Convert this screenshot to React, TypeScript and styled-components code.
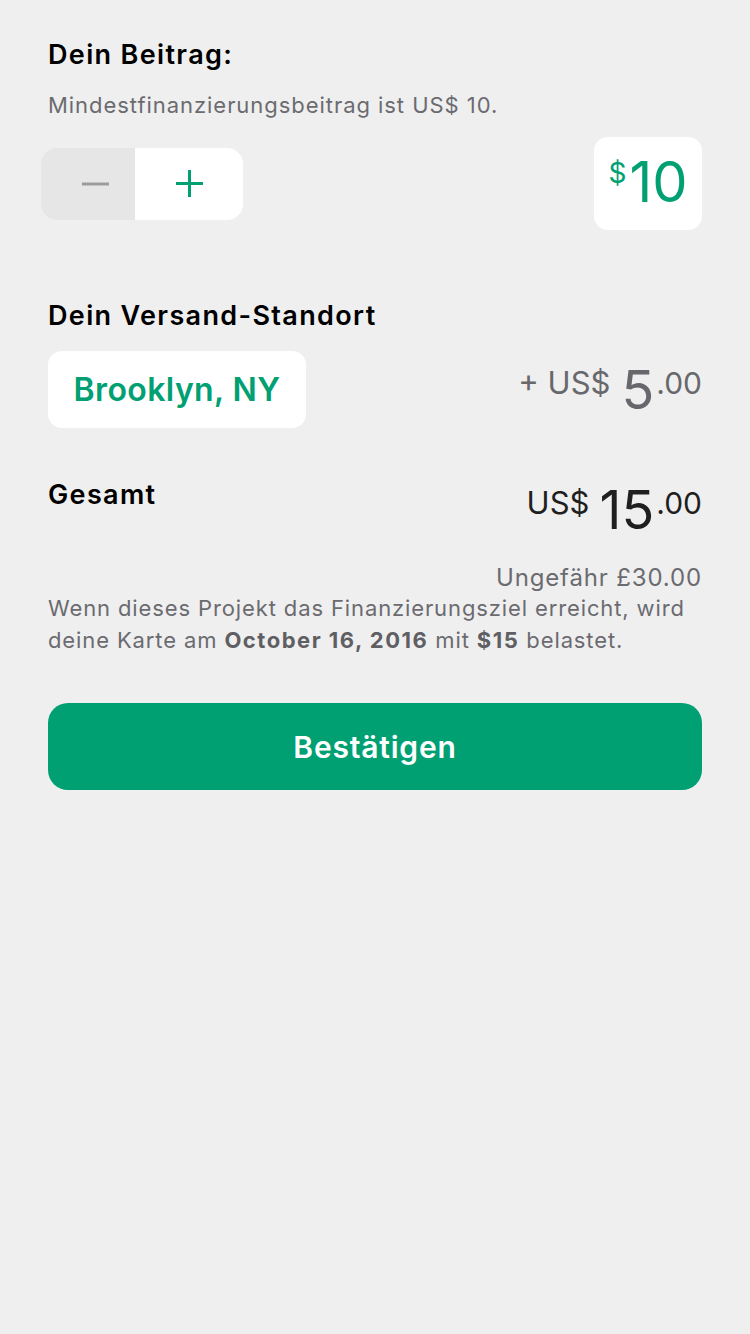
import React from "react";
import styled, { createGlobalStyle } from "styled-components";

const GREEN = "#00a073";

const Global = createGlobalStyle`
  html, body { margin: 0; padding: 0; background: #efefef; }
  body { font-family: "Inter", "Roboto", "Noto Sans", sans-serif; -webkit-font-smoothing: antialiased; }
  * { box-sizing: border-box; }
`;

const Page = styled.div`
  min-height: 1334px;
  background: #efefef;
  padding: 39px 48px 0 48px;
  display: flex;
  flex-direction: column;
`;

const SectionTitle = styled.div<{ $mt?: number }>`
  font-size: 27px;
  line-height: 32px;
  font-weight: 600;
  letter-spacing: 1.35px;
  color: #000;
  margin-top: ${(p) => p.$mt ?? 0}px;
`;

const Hint = styled.div`
  margin-top: 20px;
  font-size: 22px;
  line-height: 28px;
  letter-spacing: 0.95px;
  color: #6b6b6f;
`;

const Row = styled.div<{ $mt: number; $align?: string }>`
  display: flex;
  justify-content: space-between;
  align-items: ${(p) => p.$align ?? "center"};
  margin-top: ${(p) => p.$mt}px;
`;

const Stepper = styled.div`
  display: flex;
  width: 202px;
  height: 72px;
  border-radius: 16px;
  overflow: hidden;
  margin-left: -7px;
`;

const StepButton = styled.button<{ $minus?: boolean }>`
  border: none;
  padding: ${(p) => (p.$minus ? "0 0 0 14px" : "0")};
  flex: ${(p) => (p.$minus ? "0 0 94px" : "1")};
  background: ${(p) => (p.$minus ? "#e6e6e6" : "#ffffff")};
  display: flex;
  align-items: center;
  justify-content: center;
`;

const AmountBox = styled.div`
  background: #fff;
  border-radius: 14px;
  width: 108px;
  height: 93px;
  display: flex;
  align-items: flex-start;
  justify-content: center;
  padding-top: 17px;
  color: ${GREEN};
`;

const AmountSign = styled.span`
  font-size: 28px;
  line-height: 1;
  margin-top: 5px;
  margin-right: 3px;
`;

const AmountValue = styled.span`
  font-size: 56px;
  line-height: 1;
  font-weight: 400;
`;

const LocationButton = styled.div`
  background: #fff;
  border-radius: 14px;
  width: 258px;
  height: 77px;
  display: flex;
  align-items: center;
  justify-content: center;
  color: ${GREEN};
  font-size: 32px;
  letter-spacing: 0.4px;
  font-weight: 600;
`;

const Price = styled.div<{ $color: string; $mt?: number }>`
  display: flex;
  align-items: flex-start;
  color: ${(p) => p.$color};
  margin-top: ${(p) => p.$mt ?? 0}px;
`;

const Currency = styled.span<{ $gap: number }>`
  font-size: 31px;
  line-height: 1;
  margin-top: 4px;
  margin-right: ${(p) => p.$gap}px;
`;

const Whole = styled.span`
  font-size: 54px;
  line-height: 1;
`;

const Cents = styled.span`
  font-size: 30px;
  line-height: 1;
  margin-top: 5px;
  margin-left: 2px;
`;

const Approx = styled.div`
  margin-top: 27px;
  text-align: right;
  font-size: 24px;
  line-height: 28px;
  letter-spacing: 0.85px;
  color: #6b6b6f;
`;

const Note = styled.p`
  margin: 0;
  font-size: 22px;
  line-height: 32px;
  letter-spacing: 0.88px;
  color: #6b6b6f;
  b { font-weight: 700; color: #5f5f63; letter-spacing: 1.5px; }
`;

const Confirm = styled.button`
  margin-top: 47px;
  height: 87px;
  width: 100%;
  border: none;
  border-radius: 20px;
  background: ${GREEN};
  color: #fff;
  font-family: inherit;
  font-size: 30px;
  letter-spacing: 0.8px;
  font-weight: 600;
`;

export default function App() {
  return (
    <>
      <Global />
      <Page>
        <SectionTitle>Dein Beitrag:</SectionTitle>
        <Hint>Mindestfinanzierungsbeitrag ist US$ 10.</Hint>
        <Row $mt={18}>
          <Stepper>
            <StepButton $minus aria-label="minus">
              <svg width="27" height="4" viewBox="0 0 27 4">
                <rect x="0" y="0.5" width="27" height="3" fill="#9c9c9c" />
              </svg>
            </StepButton>
            <StepButton aria-label="plus">
              <svg width="27" height="27" viewBox="0 0 27 27">
                <rect x="0" y="12" width="27" height="3" fill={GREEN} />
                <rect x="12" y="0" width="3" height="27" fill={GREEN} />
              </svg>
            </StepButton>
          </Stepper>
          <AmountBox>
            <AmountSign>$</AmountSign>
            <AmountValue>10</AmountValue>
          </AmountBox>
        </Row>

        <SectionTitle $mt={70}>Dein Versand-Standort</SectionTitle>
        <Row $mt={19}>
          <LocationButton>Brooklyn, NY</LocationButton>
          <Price $color="#68686c">
            <Currency $gap={11}>+ US$</Currency>
            <Whole>5</Whole>
            <Cents>.00</Cents>
          </Price>
        </Row>

        <Row $mt={51} $align="flex-start">
          <SectionTitle>Gesamt</SectionTitle>
          <Price $color="#1f1f1f" $mt={4}>
            <Currency $gap={10}>US$</Currency>
            <Whole>15</Whole>
            <Cents>.00</Cents>
          </Price>
        </Row>

        <Approx>Ungefähr £30.00</Approx>
        <Note>
          Wenn dieses Projekt das Finanzierungsziel erreicht, wird deine Karte am{" "}
          <b>October 16, 2016</b> mit <b>$15</b> belastet.
        </Note>

        <Confirm>Bestätigen</Confirm>
      </Page>
    </>
  );
}
